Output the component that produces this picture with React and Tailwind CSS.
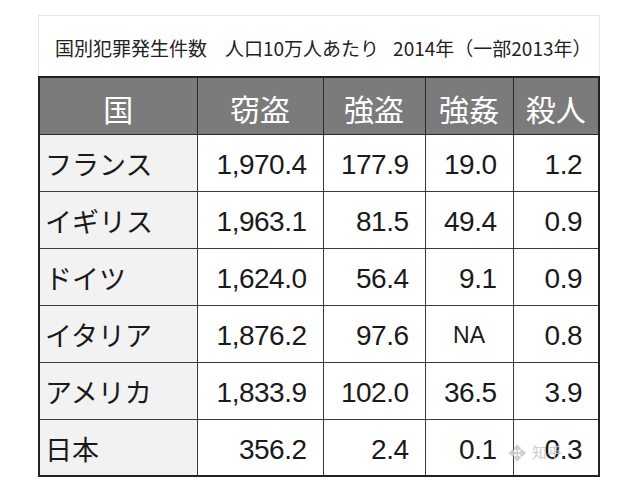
import React from 'react';

const rows = [
  { name: 'フランス', theft: '1,970.4', robbery: '177.9', rape: '19.0', murder: '1.2' },
  { name: 'イギリス', theft: '1,963.1', robbery: '81.5', rape: '49.4', murder: '0.9' },
  { name: 'ドイツ', theft: '1,624.0', robbery: '56.4', rape: '9.1', murder: '0.9' },
  { name: 'イタリア', theft: '1,876.2', robbery: '97.6', rape: 'NA', murder: '0.8' },
  { name: 'アメリカ', theft: '1,833.9', robbery: '102.0', rape: '36.5', murder: '3.9' },
  { name: '日本', theft: '356.2', robbery: '2.4', rape: '0.1', murder: '0.3' }
];

const jp = { fontFamily: '"Noto Sans CJK JP", "Noto Sans", sans-serif' };
const num = { fontFamily: '"Liberation Sans", Arial, sans-serif' };

const NumCell = ({ value }) => {
  if (value === 'NA') {
    return (
      <td className="border border-[#3a3a3a] text-center pt-[4px] text-[23px] text-[#1a1a1a]" style={num}>
        NA
      </td>
    );
  }
  return (
    <td className="border border-[#3a3a3a] text-right pr-[16px] pt-[5px] text-[28px] text-[#1a1a1a] tracking-[-0.5px]" style={num}>
      {value}
    </td>
  );
};

export default function App() {
  return (
    <div className="w-[635px] h-[483px] bg-white relative overflow-hidden">
      <div className="pt-[15px] pl-[38px]">
        {/* Title */}
        <div className="w-[562px] h-[61px] border border-b-0 border-[#e6e6e6] flex items-center pl-[16px] pt-[4px] text-[19px] text-[#222] whitespace-nowrap" style={jp}>
          <span>国別犯罪発生件数</span>
          <span className="ml-[18px]">人口10万人あたり</span>
          <span className="ml-[14px]">2014年（一部2013年）</span>
        </div>

        {/* Table */}
        <table className="border-collapse border-2 border-[#222] table-fixed w-[560px]">
          <colgroup>
            <col className="w-[158px]" />
            <col className="w-[126px]" />
            <col className="w-[102px]" />
            <col className="w-[88px]" />
            <col className="w-[86px]" />
          </colgroup>
          <thead>
            <tr className="h-[57px] bg-[#7b7b7b] text-white text-[30px]" style={jp}>
              <th className="border border-[#2a2a2a] font-normal pt-[5px]">国</th>
              <th className="border border-[#2a2a2a] font-normal pt-[5px]">窃盗</th>
              <th className="border border-[#2a2a2a] font-normal pt-[5px]">強盗</th>
              <th className="border border-[#2a2a2a] font-normal pt-[5px]">強姦</th>
              <th className="border border-[#2a2a2a] font-normal pt-[5px]">殺人</th>
            </tr>
          </thead>
          <tbody>
            {rows.map((r) => (
              <tr key={r.name} className="h-[57px]">
                <td className="border border-[#3a3a3a] bg-[#f2f2f2] pl-[5px] pt-[4px] text-[27px] text-[#1a1a1a]" style={jp}>
                  {r.name}
                </td>
                <NumCell value={r.theft} />
                <NumCell value={r.robbery} />
                <NumCell value={r.rape} />
                <NumCell value={r.murder} />
              </tr>
            ))}
          </tbody>
        </table>
      </div>

      {/* watermark */}
      <div className="absolute left-[508px] top-[440px] flex items-center gap-[6px] text-[#c8c8c8] opacity-90" style={jp}>
        <span className="text-[22px] leading-none">✥</span>
        <span className="text-[15px] leading-none">知乎</span>
      </div>
    </div>
  );
}
